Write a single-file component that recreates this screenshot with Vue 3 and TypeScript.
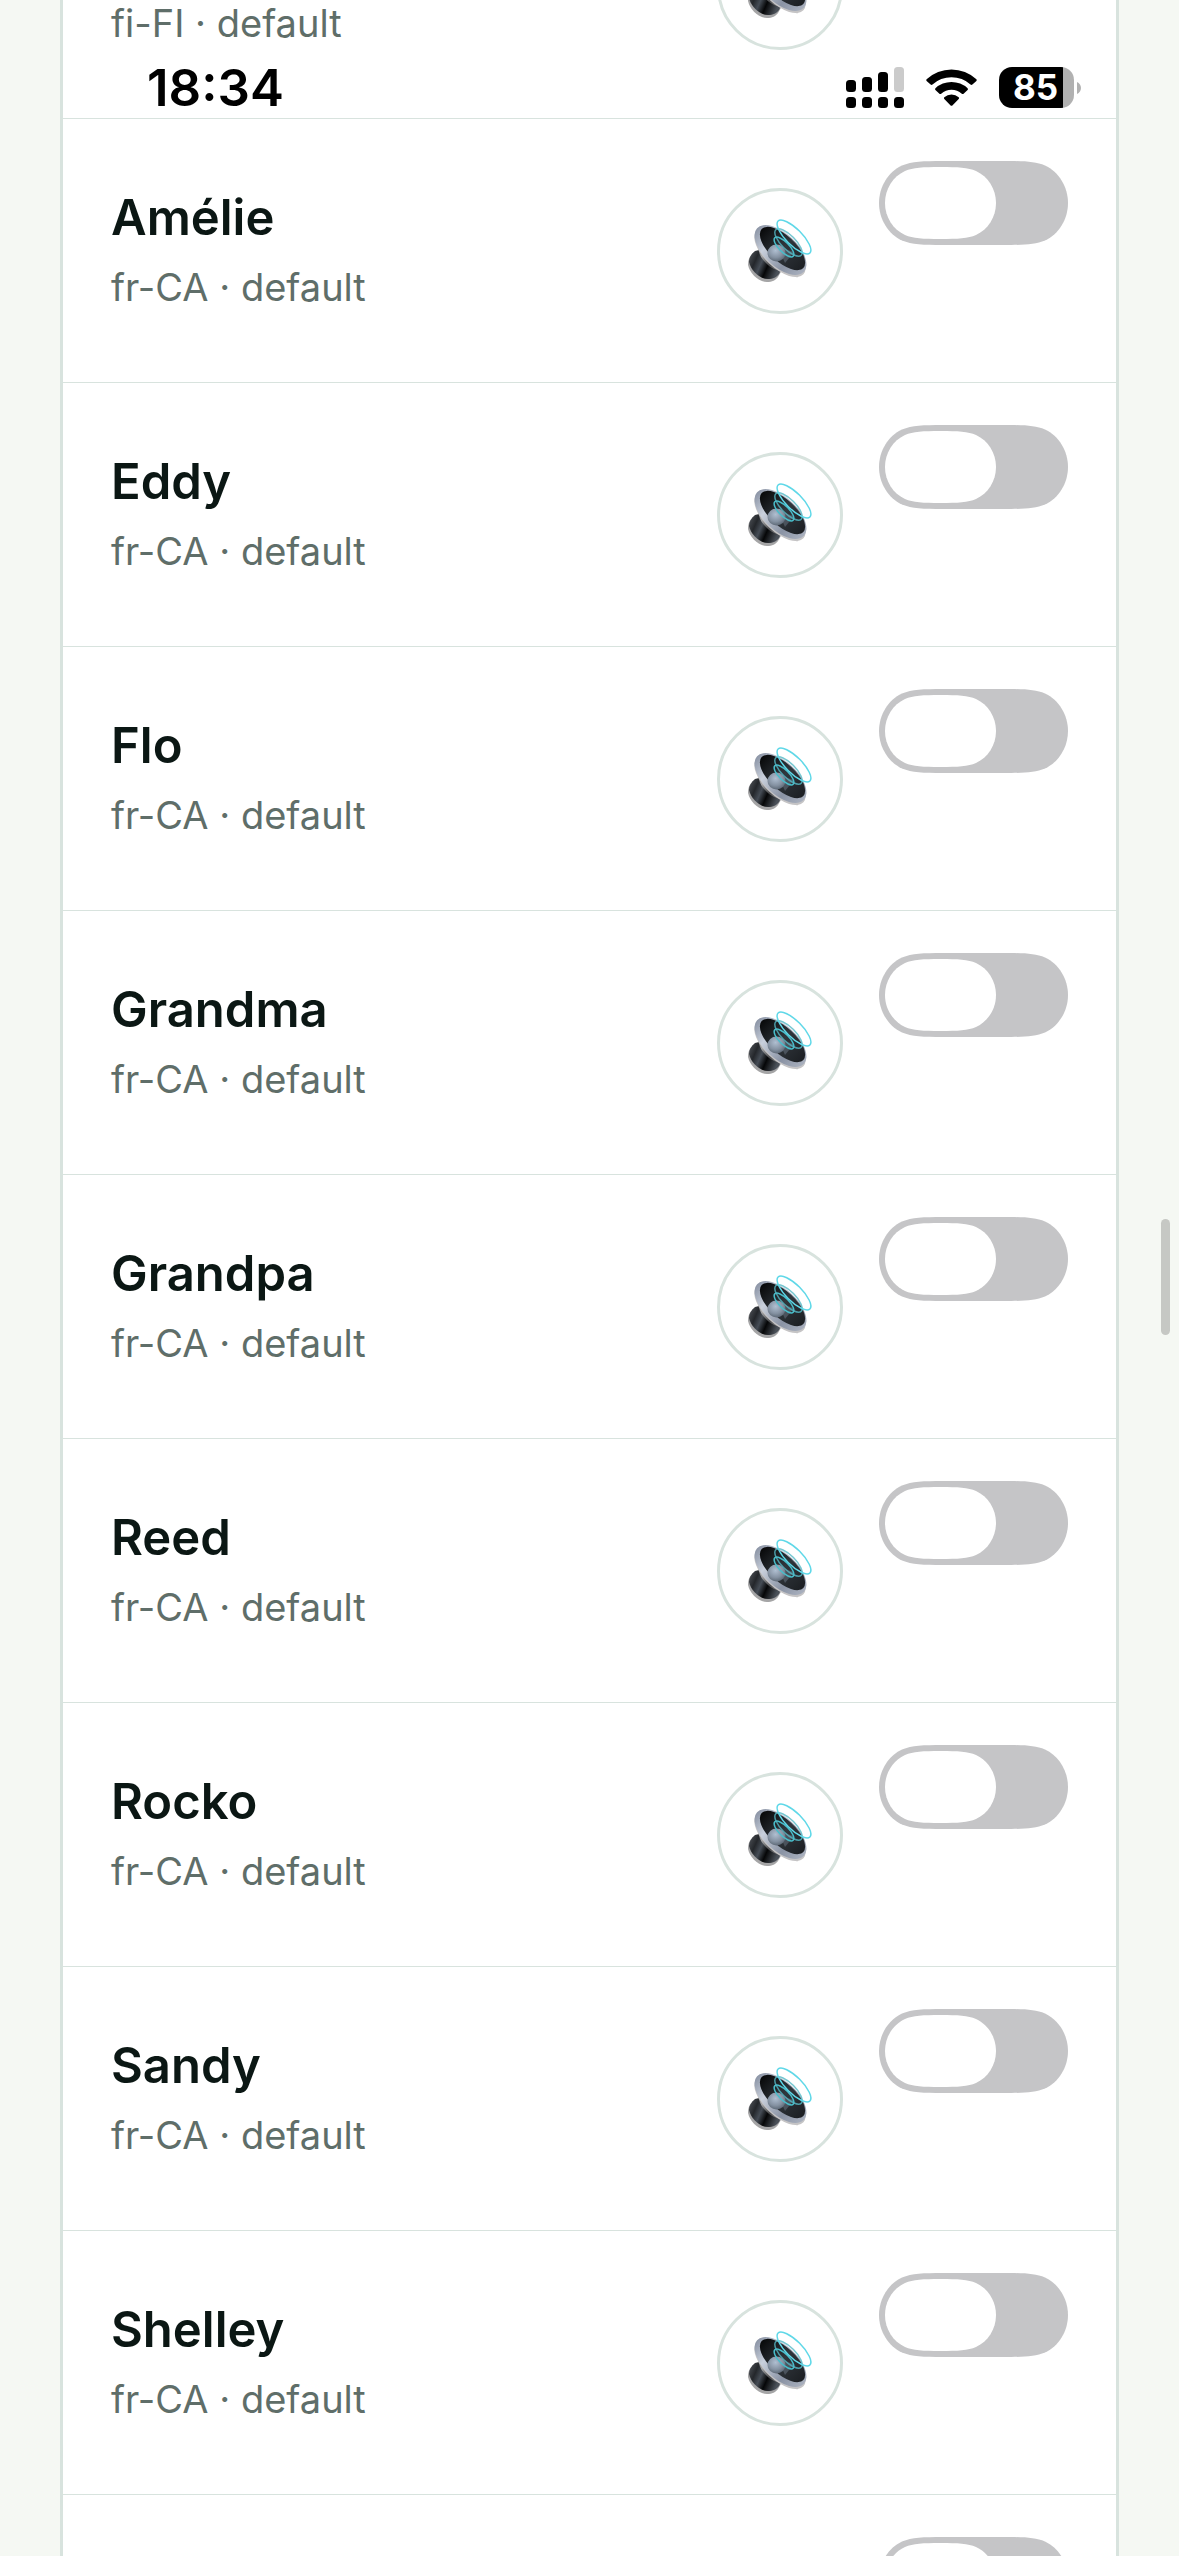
<script setup lang="ts">
import { ref } from 'vue'

interface Voice {
  id: string
  name: string
  detail: string
  enabled: boolean
}

const voices = ref<Voice[]>([
  { id: 'previous', name: '', detail: 'fi-FI · default', enabled: false },
  ...['Amélie', 'Eddy', 'Flo', 'Grandma', 'Grandpa', 'Reed', 'Rocko', 'Sandy', 'Shelley'].map((name) => ({
    id: name.toLowerCase(),
    name,
    detail: 'fr-CA · default',
    enabled: false,
  })),
  { id: 'next', name: '', detail: '', enabled: false },
])
</script>

<template>
  <div class="screen">
    <header class="status">
      <time class="clock">18:34</time>
      <div class="indicators">
        <svg class="signal" viewBox="0 0 58 41" aria-hidden="true">
          <rect x="0" y="13" width="10" height="12" rx="3.5" />
          <rect x="16" y="10" width="10" height="15" rx="3.5" />
          <rect x="32" y="5" width="10" height="20" rx="3.5" />
          <rect x="48" y="0" width="10" height="25" rx="3.5" fill="#cbcbcb" />
          <rect x="0" y="30" width="10" height="11" rx="3.5" />
          <rect x="16" y="30" width="10" height="11" rx="3.5" />
          <rect x="32" y="30" width="10" height="11" rx="3.5" />
          <rect x="48" y="30" width="10" height="11" rx="3.5" />
        </svg>
        <svg class="wifi" viewBox="0 0 51 37" aria-hidden="true">
          <path d="M.6 10.2a1.4 1.4 0 0 0 0 1.7l4 3.7c.6.5 1.3.5 1.9 0a28 28 0 0 1 38 0c.6.5 1.3.5 1.9 0l4-3.7a1.4 1.4 0 0 0 0-1.7A36.5 36.5 0 0 0 .6 10.2z" />
          <path d="M9.4 19.3c-.5.6-.5 1.2 0 1.7l4 3.7c.6.5 1.2.5 1.8 0a15.6 15.6 0 0 1 20.6 0c.6.5 1.2.5 1.8 0l4-3.7c.5-.5.5-1.1 0-1.7a23.5 23.5 0 0 0-32.2 0z" />
          <path d="M18.3 28.2c-.5.5-.5 1.2 0 1.7l6.300 6.500c.6.6 1.2.6 1.8 0l6.300-6.500c.5-.5.5-1.2 0-1.7a11 11 0 0 0-14.4 0z" />
        </svg>
        <div class="battery">
          <span class="charge">85</span>
          <svg class="tip" viewBox="0 0 4 12" aria-hidden="true"><path d="M0 0c2.500 1 4 3.500 4 6s-1.500 5-4 6z" /></svg>
        </div>
      </div>
    </header>

    <svg class="defs" aria-hidden="true">
      <defs>
        <linearGradient id="rim" x1="0" y1="0" x2="1" y2="0">
          <stop offset="0" stop-color="#8c95a6" />
          <stop offset=".3" stop-color="#c9d0dc" />
          <stop offset=".7" stop-color="#8a93a4" />
          <stop offset="1" stop-color="#a9b0be" />
        </linearGradient>
        <linearGradient id="inside" x1="0" y1="0" x2="1" y2="0">
          <stop offset="0" stop-color="#08090a" />
          <stop offset=".5" stop-color="#30363c" />
          <stop offset="1" stop-color="#1c1f23" />
        </linearGradient>
        <linearGradient id="magnet" x1="0" y1="0" x2="1" y2=".4">
          <stop offset="0" stop-color="#565a60" />
          <stop offset=".3" stop-color="#24272b" />
          <stop offset=".48" stop-color="#454c55" />
          <stop offset=".68" stop-color="#050607" />
          <stop offset="1" stop-color="#4a5058" />
        </linearGradient>
        <linearGradient id="frame" x1="0" y1="0" x2="1" y2=".6">
          <stop offset="0" stop-color="#47494c" />
          <stop offset=".25" stop-color="#a5a6a8" />
          <stop offset=".5" stop-color="#4a4b4d" />
          <stop offset="1" stop-color="#d2d2d3" />
        </linearGradient>
        <radialGradient id="dome" cx=".45" cy=".35" r=".7">
          <stop offset="0" stop-color="#b0bfd1" />
          <stop offset=".6" stop-color="#8491a1" />
          <stop offset="1" stop-color="#56616e" />
        </radialGradient>
        <symbol id="speaker" viewBox="0 0 80 92">
          <path d="M14 48C10 50 8 54 8 60c2 9 11 17 19 17 5 0 9-2 11-5l4-7-20-20z" fill="#a5a5a6" />
          <path d="M15 46c-4 3-6 7-6 11 2 9 11 17 19 17 5 0 9-2 11-5l3-6-19-19z" fill="url(#magnet)" />
          <path d="M19 37c-2 8 1 15 6 20 5 6 12 9 19 9l14 7-36-38z" fill="url(#frame)" />
          <ellipse cx="40" cy="47.500" rx="32" ry="15.500" transform="rotate(43 40 47.500)" fill="#c5c4c5" />
          <ellipse cx="40.500" cy="45" rx="32" ry="16.500" transform="rotate(43 40.500 45)" fill="url(#rim)" />
          <ellipse cx="42.500" cy="43.500" rx="28.500" ry="13" transform="rotate(43 42.500 43.500)" fill="url(#inside)" />
          <path d="M38 42l16 5-9 11z" fill="#66717e" opacity=".55" />
          <ellipse cx="36.500" cy="48" rx="9" ry="8.500" fill="url(#dome)" />
          <g fill="none" stroke="#48bdca" stroke-width="1.500">
            <ellipse cx="44" cy="42" rx="13" ry="5" transform="rotate(45 44 42)" />
            <ellipse cx="48.500" cy="37.500" rx="18" ry="7" transform="rotate(45 48.500 37.500)" stroke="#55b9c6" stroke-opacity=".8" />
            <ellipse cx="54" cy="32" rx="22.500" ry="8" transform="rotate(45 54 32)" stroke="#5fd8e8" />
          </g>
        </symbol>
      </defs>
    </svg>

    <main class="viewport">
      <ul class="voices">
        <li v-for="voice in voices" :key="voice.id" class="voice">
          <label class="label" :for="`voice-${voice.id}`">
            <span class="name">{{ voice.name }}</span>
            <span class="detail">{{ voice.detail }}</span>
          </label>
          <button class="preview" type="button" aria-label="Play sample">
            <svg class="speaker" aria-hidden="true"><use href="#speaker" /></svg>
          </button>
          <input :id="`voice-${voice.id}`" v-model="voice.enabled" class="toggle" type="checkbox" />
        </li>
      </ul>
    </main>
    <div class="scrollbar"></div>
  </div>
</template>

<style>
body {
  background: #f5f8f3;
}
</style>

<style scoped>
.screen {
  position: relative;
  height: 100vh;
  overflow: hidden;
  background: #f5f8f3;
  font-family: Inter, "Liberation Sans", sans-serif;
}

.defs {
  position: absolute;
  width: 0;
  height: 0;
}

.status {
  position: absolute;
  z-index: 1;
  top: 0;
  left: 0;
  right: 0;
  box-sizing: border-box;
  height: 118px;
  padding: 58px 98px 0 147px;
  display: flex;
  justify-content: space-between;
  align-items: flex-start;
}

.clock {
  color: #000;
  font-size: 51px;
  line-height: 60px;
  font-weight: 600;
}

.indicators {
  display: flex;
  align-items: center;
  gap: 22px;
  padding-top: 9px;
}

.signal {
  width: 58px;
  height: 41px;
}

.wifi {
  width: 51px;
  height: 37px;
}

.battery {
  display: flex;
  align-items: center;
  gap: 3px;
}

.charge {
  width: 75px;
  height: 41px;
  padding-right: 2px;
  box-sizing: border-box;
  border-radius: 13px;
  background: linear-gradient(to right, #000 64px, #b1b1b1 64px);
  color: #fff;
  font-size: 35px;
  line-height: 41px;
  font-weight: 700;
  text-align: center;
}

.tip {
  width: 4px;
  height: 12px;
  fill: #b1b1b1;
}

.viewport {
  margin: 0 60px;
  border: solid #d8e3de;
  border-width: 0 3px;
  background: #fff;
}

/* The list rests part-way through a row, under the status bar. */
.voices {
  margin: -145px 0 0;
  padding: 0;
  list-style: none;
}

.voice {
  display: flex;
  align-items: center;
  gap: 36px;
  box-sizing: border-box;
  min-height: 264px;
  padding: 42px 48px;
  border-bottom: 1px solid #d8e3de;
}

.label {
  flex: 1;
  display: flex;
  flex-direction: column;
  gap: 3px;
  padding-bottom: 3px;
}

.name {
  min-height: 72px;
  color: #0b1714;
  font-size: 49px;
  line-height: 72px;
  font-weight: 600;
}

.detail {
  min-height: 60px;
  color: #5f6e69;
  font-size: 38px;
  line-height: 60px;
}

.preview {
  box-sizing: border-box;
  width: 126px;
  height: 126px;
  padding: 0;
  border: 3px solid #d8e3de;
  border-radius: 50%;
  background: #fff;
  display: flex;
  align-items: center;
  justify-content: center;
}

.speaker {
  width: 80px;
  height: 92px;
}

.toggle {
  appearance: none;
  align-self: flex-start;
  width: 189px;
  height: 84px;
  margin: 0;
  padding: 6px;
  box-sizing: border-box;
  background: #c5c5c7;
  clip-path: path("M0 42C0 26 9 11 23 4.500C33 .5 44 0 64 0H125C145 0 156 .5 166 4.500C180 11 189 26 189 42S180 73 166 79.500C156 83.500 145 84 125 84H64C44 84 33 83.500 23 79.500C9 73 0 58 0 42Z");
}

.toggle::before {
  content: "";
  display: block;
  width: 111px;
  height: 72px;
  background: #fff;
  clip-path: path("M0 36C0 22 8 9.500 20 4C28 .5 38 0 55.500 0S83 .5 91 4C103 9.500 111 22 111 36S103 62.500 91 68C83 71.500 73 72 55.500 72S28 71.500 20 68C8 62.500 0 50 0 36Z");
}

.toggle:checked {
  background: #34c759;
}

.toggle:checked::before {
  margin-left: auto;
}

.scrollbar {
  position: absolute;
  top: 1219px;
  right: 9px;
  width: 9px;
  height: 116px;
  border-radius: 5px;
  background: #c6c8c4;
}
</style>
